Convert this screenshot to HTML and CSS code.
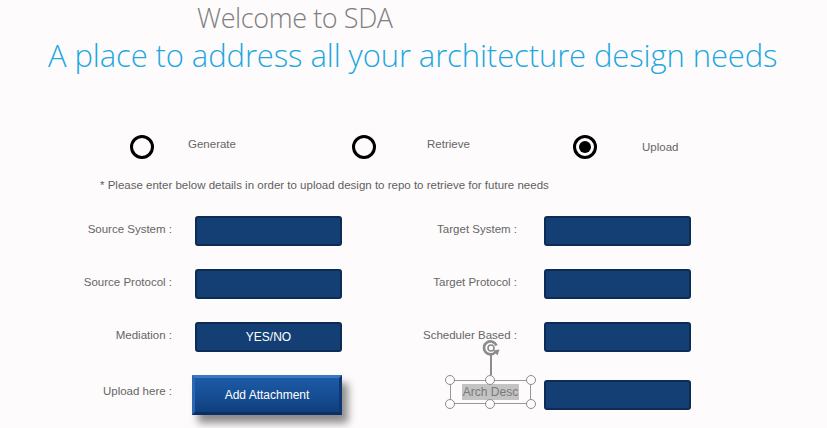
FILE: index.html
```html
<!DOCTYPE html>
<html>
<head>
<meta charset="utf-8">
<link rel="stylesheet" href="styles.css">
</head>
<body>
<div class="page">
  <header class="hero">
    <h1 class="welcome">Welcome to SDA</h1>
    <h2 class="tagline">A place to address all your architecture design needs</h2>
  </header>

  <div class="radios">
    <div class="radio r1"><span class="circle"></span><span class="rlabel up">Generate</span></div>
    <div class="radio r2"><span class="circle"></span><span class="rlabel up">Retrieve</span></div>
    <div class="radio r3"><span class="circle checked"></span><span class="rlabel">Upload</span></div>
  </div>

  <p class="note">* Please enter below details in order to upload design to repo to retrieve for future needs</p>

  <div class="form">
    <div class="label">Source System :</div>
    <div class="field"><div class="box"></div></div>
    <div class="label right">Target System :</div>
    <div class="field"><div class="box"></div></div>

    <div class="label">Source Protocol :</div>
    <div class="field"><div class="box"></div></div>
    <div class="label right">Target Protocol :</div>
    <div class="field"><div class="box"></div></div>

    <div class="label">Mediation :</div>
    <div class="field"><div class="box">YES/NO</div></div>
    <div class="label right">Scheduler Based :</div>
    <div class="field"><div class="box"></div></div>

    <div class="label last">Upload here :</div>
    <div class="field"><div class="attach">Add Attachment</div></div>
    <div class="label selcell">
      <div class="selection">
        <span class="seltext">Arch Desc</span>
        <span class="stem"></span>
        <svg class="rotate" width="20" height="20" viewBox="0 0 20 20">
          <path d="M15.5 7.5 A6.5 6.5 0 1 0 14.5 14" fill="none" stroke="#8c8c8c" stroke-width="2.6"/>
          <circle cx="10" cy="10" r="3" fill="none" stroke="#8c8c8c" stroke-width="1.6"/>
          <path d="M12 12.5 L18.5 11.5 L16.5 17.5 Z" fill="#8c8c8c"/>
        </svg>
        <span class="h tl"></span><span class="h tm"></span><span class="h tr"></span>
        <span class="h bl"></span><span class="h bm"></span><span class="h br"></span>
      </div>
    </div>
    <div class="field"><div class="box"></div></div>
  </div>
</div>
</body>
</html>
```
FILE: styles.css
```css
html, body {
  margin: 0;
  padding: 0;
  background: #fdfbfc;
}
body {
  font-family: "Liberation Sans", Arial, sans-serif;
  width: 827px;
  height: 428px;
  overflow: hidden;
}
.page {
  padding-top: 2px;
}
.hero h1, .hero h2 {
  margin: 0;
  font-family: "Open Sans", "Noto Sans", sans-serif;
  font-weight: 300;
  white-space: nowrap;
}
.welcome {
  font-size: 27px;
  line-height: 32px;
  color: #7f7f7f;
  padding-left: 197px;
  letter-spacing: -0.4px;
}
.tagline {
  font-size: 31px;
  line-height: 42px;
  color: #1ea8df;
  padding-left: 48px;
  letter-spacing: -0.1px;
}

.radios {
  display: flex;
  margin-top: 58px;
  padding-left: 130px;
  height: 26px;
  align-items: center;
}
.radio {
  display: flex;
  align-items: center;
}
.r1 { width: 222px; gap: 34px; }
.r2 { width: 221px; gap: 51px; }
.r3 { gap: 45px; }
.circle {
  width: 18px;
  height: 18px;
  border: 3px solid #000;
  border-radius: 50%;
  display: flex;
  align-items: center;
  justify-content: center;
  flex: none;
}
.circle.checked::after {
  content: "";
  width: 12px;
  height: 12px;
  border-radius: 50%;
  background: #000;
}
.rlabel {
  font-size: 11.5px;
  color: #666;
}
.rlabel.up {
  margin-bottom: 6px;
}

.note {
  margin: 17px 0 0 100px;
  font-size: 11.5px;
  line-height: 16px;
  color: #5f5f5f;
}

.form {
  display: grid;
  grid-template-columns: 172px 170px 202px 147px;
  grid-template-rows: 30px 30px 30px 40px;
  row-gap: 23px;
  margin-top: 23px;
}
.label {
  font-size: 11.5px;
  color: #666;
  text-align: right;
  align-self: center;
  padding-bottom: 4px;
  white-space: nowrap;
}
.label.right {
  padding-right: 27px;
}
.label.last {
  padding-bottom: 9px;
}
.field {
  display: flex;
  justify-content: flex-end;
  align-items: center;
}
.box {
  width: 143px;
  height: 26px;
  background: #133f75;
  border: 2px solid #0c2b55;
  border-radius: 3px;
  color: #fff;
  font-size: 12px;
  display: flex;
  align-items: center;
  justify-content: center;
}
.form .field:nth-child(4n+2) {
  justify-content: flex-start;
  padding-left: 23px;
}
.form .field:nth-child(4n+2) .attach {
  margin-left: -3px;
}
.attach {
  width: 152px;
  height: 40px;
  box-sizing: border-box;
  background: linear-gradient(#1d5aa6, #154d93 55%, #0f3f7d);
  border-top: 3px solid #3a78c4;
  border-left: 3px solid #2a67b2;
  border-right: 3px solid #0d3873;
  border-bottom: 3px solid #0b2f62;
  color: #fff;
  font-size: 12px;
  display: flex;
  align-items: center;
  justify-content: center;
  box-shadow: 6px 8px 8px rgba(0, 0, 0, 0.45);
}

.label.selcell {
  display: flex;
  justify-content: flex-end;
  padding-bottom: 0;
  align-self: center;
  padding-right: 13px;
}
.selection {
  position: relative;
  width: 79px;
  height: 22px;
  border: 1px solid #999;
  display: flex;
  align-items: center;
  justify-content: center;
  margin-top: -6px;
}
.seltext {
  background: #c3c3c3;
  color: #7a7a7a;
  font-size: 12px;
  line-height: 16px;
  padding: 0 1px;
}
.h {
  position: absolute;
  width: 8px;
  height: 8px;
  border: 1.5px solid #8c8c8c;
  border-radius: 50%;
  background: #fdfbfc;
}
.tl { left: -6px; top: -6px; }
.tm { left: 34px; top: -6px; }
.tr { right: -6px; top: -6px; }
.bl { left: -6px; bottom: -6px; }
.bm { left: 34px; bottom: -6px; }
.br { right: -6px; bottom: -6px; }
.stem {
  position: absolute;
  left: 39px;
  top: -27px;
  width: 1.5px;
  height: 21px;
  background: #8c8c8c;
}
.rotate {
  position: absolute;
  left: 30px;
  top: -43px;
}
```
